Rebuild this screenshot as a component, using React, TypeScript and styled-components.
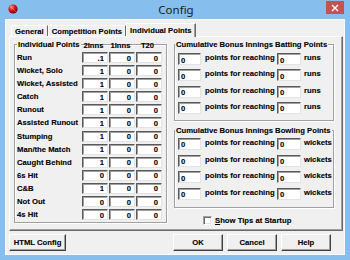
import React from 'react';
import styled, { createGlobalStyle } from 'styled-components';

const FRAME = '#86bfee';
const FACE = '#f0f0f0';

const GlobalStyle = createGlobalStyle`
  html, body {
    margin: 0;
    padding: 0;
  }
  body {
    width: 350px;
    height: 260px;
    overflow: hidden;
    background: ${FRAME};
  }
`;

const individualPoints = [
  ['Run', '.1', '0', '0'],
  ['Wicket, Solo', '1', '0', '0'],
  ['Wicket, Assisted', '1', '0', '0'],
  ['Catch', '1', '0', '0'],
  ['Runout', '1', '0', '0'],
  ['Assisted Runout', '1', '0', '0'],
  ['Stumping', '1', '0', '0'],
  ['Man/the Match', '1', '0', '0'],
  ['Caught Behind', '1', '0', '0'],
  ['6s Hit', '0', '0', '0'],
  ['C&B', '1', '0', '0'],
  ['Not Out', '0', '0', '0'],
  ['4s Hit', '0', '0', '0'],
];

const CricketBall = () => (
  <svg width="10" height="10" viewBox="0 0 10 10">
    <defs>
      <radialGradient id="ball" cx="0.35" cy="0.3" r="0.75">
        <stop offset="0" stopColor="#ff8a80" />
        <stop offset="0.45" stopColor="#d81b1b" />
        <stop offset="1" stopColor="#6a0000" />
      </radialGradient>
    </defs>
    <circle cx="5" cy="5" r="4.6" fill="url(#ball)" />
    <path d="M2 2.2 Q5 5 8 7.8" stroke="#f4d0c0" strokeWidth="0.5" fill="none" opacity="0.7" />
  </svg>
);

const CloseGlyph = () => (
  <svg width="8" height="8" viewBox="0 0 8 8">
    <path d="M1 1 L7 7 M7 1 L1 7" stroke="#fff" strokeWidth="1.4" />
  </svg>
);

export default function App() {
  return (
    <>
      <GlobalStyle />
      <Window>
        <TitleBar>
          <IconCell>
            <CricketBall />
          </IconCell>
          <Title>Config</Title>
          <CloseButton>
            <CloseGlyph />
          </CloseButton>
        </TitleBar>
        <Client>
          <TabRow>
            <Tab>General</Tab>
            <Tab>Competition Points</Tab>
            <Tab $active>Individual Points</Tab>
          </TabRow>
          <Panel>
            <GroupBox $width={153}>
              <Legend $offset={2}>Individual Points</Legend>
              <PointsHeader>
                <span />
                <ColumnHead>2Inns</ColumnHead>
                <ColumnHead>1Inns</ColumnHead>
                <ColumnHead>T20</ColumnHead>
              </PointsHeader>
              <PointsGrid>
                {individualPoints.map(([label, a, b, c]) => (
                  <React.Fragment key={label}>
                    <RowLabel>{label}</RowLabel>
                    <Field readOnly value={a} $align="right" />
                    <Field readOnly value={b} $align="right" />
                    <Field readOnly value={c} $align="right" />
                  </React.Fragment>
                ))}
              </PointsGrid>
            </GroupBox>
            <RightColumn>
              <GroupBox>
                <Legend $offset={0}>Cumulative Bonus Innings Batting Points</Legend>
                <BonusRows $top={4} $bottom={6} $gap={4.3}>
                  {[0, 1, 2, 3].map((i) => (
                    <BonusRow key={i}>
                      <Field readOnly value="0" $width={23} $height={12} />
                      <BonusText>points for reaching</BonusText>
                      <Field readOnly value="0" $width={24} $height={12} />
                      <UnitText>runs</UnitText>
                    </BonusRow>
                  ))}
                </BonusRows>
              </GroupBox>
              <GroupBox $spaced>
                <Legend $offset={0}>Cumulative Bonus Innings Bowling Points</Legend>
                <BonusRows $top={3} $bottom={7} $gap={4.7}>
                  {[0, 1, 2, 3].map((i) => (
                    <BonusRow key={i}>
                      <Field readOnly value="0" $width={23} $height={12} />
                      <BonusText>points for reaching</BonusText>
                      <Field readOnly value="0" $width={24} $height={12} />
                      <UnitText>wickets</UnitText>
                    </BonusRow>
                  ))}
                </BonusRows>
              </GroupBox>
              <CheckRow>
                <CheckBox />
                <span>
                  <u>S</u>how Tips at Startup
                </span>
              </CheckRow>
            </RightColumn>
          </Panel>
          <ButtonRow>
            <Button $width={57}>HTML Config</Button>
            <Spacer />
            <Button>OK</Button>
            <Button>Cancel</Button>
            <Button>Help</Button>
          </ButtonRow>
        </Client>
      </Window>
    </>
  );
}

const Window = styled.div`
  width: 350px;
  height: 260px;
  box-sizing: border-box;
  background: ${FRAME};
  display: flex;
  flex-direction: column;
  padding: 0 5px 5px;
  font-family: "Liberation Sans", Arial, sans-serif;
  font-weight: bold;
  font-size: 7.7px;
  color: #000;
  -webkit-text-stroke: 0.1px #000;
`;

const TitleBar = styled.div`
  height: 19px;
  margin: 0 -5px;
  padding: 0 6px 0 8px;
  display: grid;
  grid-template-columns: 1fr auto 1fr;
  align-items: start;
  -webkit-text-stroke: 0;
`;

const IconCell = styled.div`
  margin-top: 4px;
  display: flex;
`;

const Title = styled.div`
  font-family: "Noto Sans", "Open Sans", sans-serif;
  font-weight: normal;
  font-size: 11.5px;
  line-height: 19px;
  color: #1a1a1a;
`;

const CloseButton = styled.div`
  justify-self: end;
  margin-top: 1px;
  width: 18px;
  height: 13px;
  background: #c75050;
  display: flex;
  align-items: center;
  justify-content: center;
`;

const Client = styled.div`
  flex: 1;
  background: ${FACE};
  display: flex;
  flex-direction: column;
  padding: 4px 2px 4px 4px;
  box-shadow: inset 0 0 0 1px #f8fbfe;
`;

const TabRow = styled.div`
  height: 13px;
  display: flex;
  align-items: flex-end;
  padding-left: 2px;
`;

const Tab = styled.div<{ $active?: boolean }>`
  box-sizing: border-box;
  height: ${(p) => (p.$active ? 14 : 11)}px;
  padding: 0 ${(p) => (p.$active ? 3 : 3)}px;
  display: flex;
  align-items: center;
  white-space: nowrap;
  background: ${FACE};
  border-top: 1px solid #fff;
  border-left: 1px solid #fff;
  border-right: 1px solid #696969;
  box-shadow: ${(p) => (p.$active ? 'inset -1px 0 0 #a0a0a0' : 'none')};
  position: ${(p) => (p.$active ? 'relative' : 'static')};
  z-index: ${(p) => (p.$active ? 1 : 0)};
  margin-bottom: ${(p) => (p.$active ? -1 : 0)}px;
`;

const Panel = styled.div`
  height: 195px;
  box-sizing: border-box;
  border: 1px solid;
  border-color: #fff #696969 #696969 #fff;
  box-shadow: inset -1px -1px 0 #a0a0a0;
  display: flex;
  align-items: flex-start;
  gap: 7px;
  padding: 3px 8px 0 4px;
`;

const GroupBox = styled.fieldset<{ $width?: number; $spaced?: boolean }>`
  margin: ${(p) => (p.$spaced ? 5 : 0)}px 0 0;
  padding: 0;
  min-width: 0;
  width: ${(p) => (p.$width ? `${p.$width}px` : 'auto')};
  box-sizing: border-box;
  border: 1px solid #a0a0a0;
  box-shadow: 1px 1px 0 #fff, inset 1px 1px 0 #fff;
`;

const Legend = styled.legend<{ $offset: number }>`
  margin-left: ${(p) => p.$offset}px;
  padding: 0 1px;
  line-height: 9px;
  height: 9px;
  background: ${FACE};
  white-space: nowrap;
`;

const PointsHeader = styled.div`
  display: grid;
  grid-template-columns: 64px repeat(3, 26px);
  column-gap: 1px;
  padding-left: 2px;
  margin-top: -7px;
  line-height: 8px;
  height: 8px;
`;

const ColumnHead = styled.span`
  text-align: center;
  padding-right: 3px;
`;

const PointsGrid = styled.div`
  display: grid;
  grid-template-columns: 64px repeat(3, 26px);
  grid-auto-rows: 11px;
  column-gap: 1px;
  row-gap: 2.1px;
  align-items: center;
  padding: 2px 3px 2px 2px;
`;

const RowLabel = styled.span`
  white-space: nowrap;
  line-height: 11px;
`;

const Field = styled.input<{ $align?: 'left' | 'right'; $width?: number; $height?: number }>`
  box-sizing: border-box;
  width: ${(p) => (p.$width ? `${p.$width}px` : '100%')};
  height: ${(p) => p.$height ?? 11}px;
  margin: 0;
  padding: ${(p) => (p.$align === 'right' ? '1px 3px 0 0' : '2px 0 0 2px')};
  font: bold 7.7px "Liberation Sans", Arial, sans-serif;
  -webkit-text-stroke: 0.1px #000;
  color: #000;
  text-align: ${(p) => p.$align ?? 'left'};
  background: #fff;
  border: 1px solid;
  border-color: #5a5a5a #e3e3e3 #e3e3e3 #5a5a5a;
  box-shadow: inset 1px 1px 0 #a0a0a0;
  outline: none;
`;

const RightColumn = styled.div`
  width: 160px;
  display: flex;
  flex-direction: column;
`;

const BonusRows = styled.div<{ $top: number; $bottom: number; $gap: number }>`
  display: flex;
  flex-direction: column;
  gap: ${(p) => p.$gap}px;
  padding: ${(p) => p.$top}px 0 ${(p) => p.$bottom}px 3px;
`;

const BonusRow = styled.div`
  display: flex;
  align-items: flex-start;
  height: 12px;
`;

const BonusText = styled.span`
  margin: 0 1px 0 4px;
  line-height: 9px;
  white-space: nowrap;
  width: 71px;
`;

const UnitText = styled.span`
  margin-left: 3px;
  line-height: 9px;
`;

const CheckRow = styled.div`
  display: flex;
  align-items: center;
  gap: 3px;
  margin-top: 8px;
  padding-left: 29px;
  line-height: 9px;
`;

const CheckBox = styled.span`
  box-sizing: border-box;
  width: 9px;
  height: 9px;
  background: #fff;
  border: 1px solid;
  border-color: #a0a0a0 #fff #fff #a0a0a0;
  box-shadow: inset 1px 1px 0 #696969, inset -1px -1px 0 #e3e3e3;
`;

const ButtonRow = styled.div`
  display: flex;
  gap: 4px;
  margin-top: 3px;
  padding-right: 12px;
`;

const Spacer = styled.div`
  flex: 1;
`;

const Button = styled.div<{ $width?: number }>`
  box-sizing: border-box;
  width: ${(p) => p.$width ?? 50}px;
  height: 17px;
  display: flex;
  align-items: center;
  justify-content: center;
  background: ${FACE};
  border: 1px solid;
  border-color: #fff #404040 #404040 #fff;
  box-shadow: inset -1px -1px 0 #a0a0a0;
  white-space: nowrap;
`;
